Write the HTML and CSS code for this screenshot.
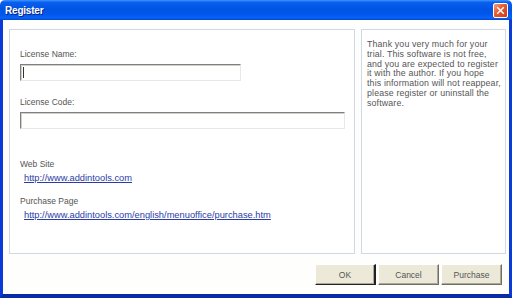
FILE: index.html
```html
<!DOCTYPE html>
<html lang="en">
<head>
    <meta charset="UTF-8">
    <title>Register</title>
    <link rel="stylesheet" href="styles.css">
</head>
<body>
    <div class="window">
        <div class="titlebar">
            <span class="title">Register</span>
            <span class="close-btn">
                <svg width="14" height="14" viewBox="0 0 14 14">
                    <path d="M4 4 L10 10 M10 4 L4 10" stroke="#fff" stroke-width="1.6" stroke-linecap="square"/>
                </svg>
            </span>
        </div>
        <div class="client">
            <div class="panels">
                <div class="panel main-panel">
                    <label class="field-label">License Name:</label>
                    <div class="text-input name-input"><span class="caret"></span></div>
                    <label class="field-label code-label">License Code:</label>
                    <div class="text-input code-input"></div>

                    <div class="field-label site-label">Web Site</div>
                    <a class="link" href="#">http://www.addintools.com</a>
                    <div class="field-label purchase-label">Purchase Page</div>
                    <a class="link" href="#">http://www.addintools.com/english/menuoffice/purchase.htm</a>
                </div>
                <div class="panel note-panel">
                    <p>Thank you very much for your<br>
                    trial. This software is not free,<br>
                    and you are expected to register<br>
                    it with the author. If you hope<br>
                    this information will not reappear,<br>
                    please register or uninstall the<br>
                    software.</p>
                </div>
            </div>
            <div class="buttons">
                <button class="btn btn-default">OK</button>
                <button class="btn">Cancel</button>
                <button class="btn">Purchase</button>
            </div>
        </div>
    </div>
</body>
</html>
```

FILE: styles.css
```css
html, body {
    margin: 0;
    padding: 0;
}
body {
    width: 512px;
    height: 298px;
    overflow: hidden;
    font-family: "Liberation Sans", Arial, sans-serif;
}
.window {
    width: 512px;
    height: 298px;
    display: flex;
    flex-direction: column;
}
.titlebar {
    height: 20px;
    display: flex;
    align-items: center;
    padding: 0 4px 0 5px;
    background: linear-gradient(#3d95ff 0%, #0a5fef 12%, #0054e3 45%, #0058ee 75%, #0a62f5 90%, #0046d4 100%);
    border-radius: 5px 5px 0 0;
}
.title {
    color: #fff;
    font-weight: bold;
    font-size: 10px;
    letter-spacing: -0.2px;
    text-shadow: 1px 1px 0 #0a1e80;
}
.close-btn {
    margin-left: auto;
    width: 15px;
    height: 15px;
    border: 1px solid #fff;
    border-radius: 2px;
    box-sizing: border-box;
    background: linear-gradient(135deg, #f4a080, #e5582e 45%, #cf3e1c);
    display: flex;
    align-items: center;
    justify-content: center;
    margin-top: 1px;
}
.close-btn svg {
    width: 13px;
    height: 13px;
}
.client {
    flex: 1;
    display: flex;
    flex-direction: column;
    background: #fefefc;
    border-left: 3px solid #0a3ad8;
    border-right: 3px solid #0a3ad8;
    border-bottom: 4px solid #0a2aa8;
    padding: 9px 7px 9px 6px;
}
.panels {
    display: flex;
    gap: 6px;
    height: 225px;
}
.panel {
    border: 1px solid #cfd8e4;
    box-sizing: border-box;
    background: #fff;
}
.main-panel {
    width: 346px;
    padding: 18px 10px 0 10px;
    display: flex;
    flex-direction: column;
    align-items: flex-start;
}
.note-panel {
    flex: 1;
    padding: 10px 4px 0 5px;
}
.note-panel p {
    margin: 0;
    font-size: 8.8px;
    line-height: 9.8px;
    letter-spacing: 0.15px;
    color: #555;
    white-space: nowrap;
}
.field-label {
    font-size: 8.5px;
    line-height: 12px;
    color: #555;
}
.text-input {
    box-sizing: border-box;
    height: 17px;
    margin-top: 4px;
    border-top: 1px solid #808080;
    border-left: 1px solid #808080;
    border-bottom: 1px solid #e8e8e4;
    border-right: 1px solid #e8e8e4;
    background: #fff;
    box-shadow: inset 1px 1px 0 #d4d0c8;
    position: relative;
}
.name-input {
    width: 221px;
}
.code-input {
    width: 325px;
}
.caret {
    position: absolute;
    left: 2px;
    top: 2px;
    width: 1px;
    height: 11px;
    background: #333;
}
.code-label {
    margin-top: 15px;
}
.site-label {
    margin-top: 29px;
}
.purchase-label {
    margin-top: 11px;
}
.link {
    font-size: 9.3px;
    line-height: 12px;
    color: #2a3ca8;
    margin: 2px 0 0 4px;
}
.buttons {
    display: flex;
    justify-content: flex-end;
    gap: 2px;
    margin-top: 10px;
}
.btn {
    width: 61px;
    height: 21px;
    padding: 0;
    font-family: "Liberation Sans", Arial, sans-serif;
    font-size: 8.5px;
    color: #555;
    background: #ece9d8;
    border: 1px solid;
    border-color: #fff #716f64 #716f64 #fff;
    box-shadow: inset -1px -1px 0 #aca899;
}
.btn-default {
    border-right: 2px solid #222;
    border-bottom: 1px solid #222;
}
```
